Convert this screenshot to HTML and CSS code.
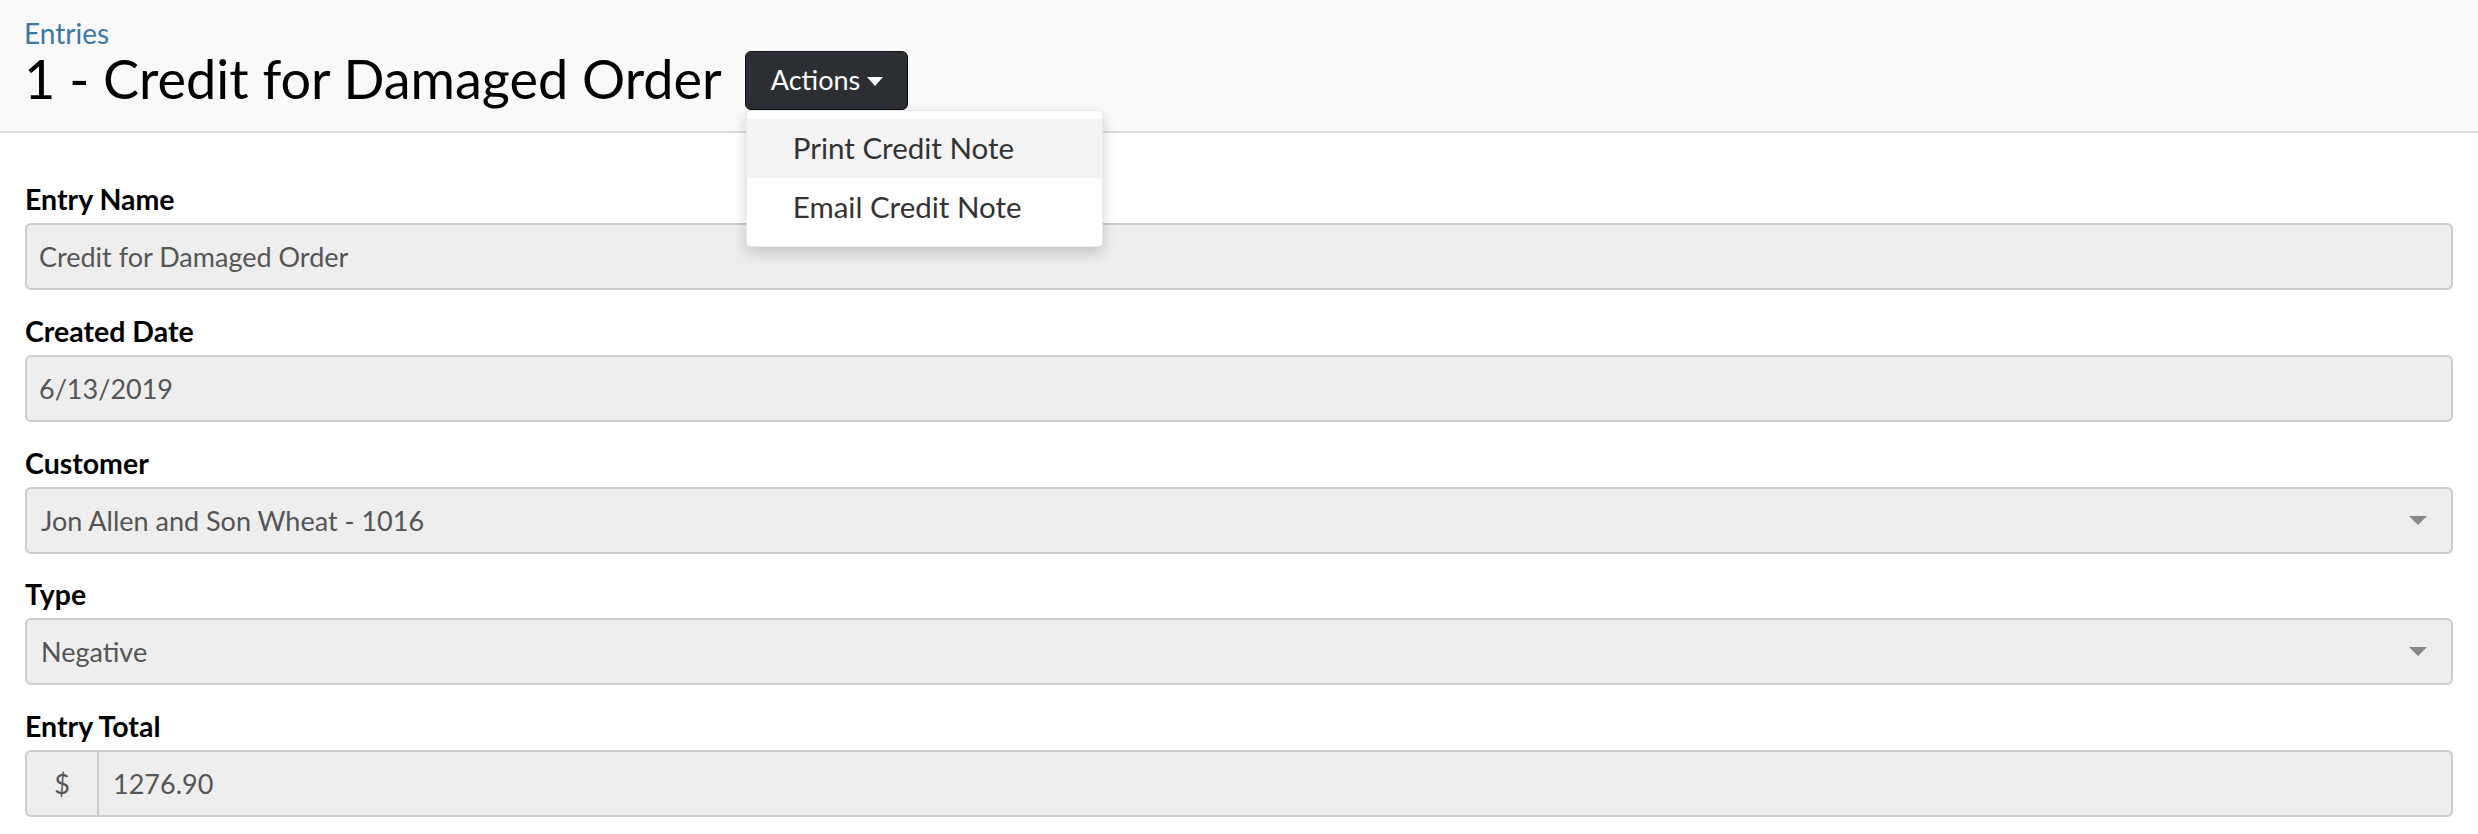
FILE: index.html
```html
<!DOCTYPE html>
<html lang="en">
<head>
<meta charset="utf-8">
<title>1 - Credit for Damaged Order</title>
<link rel="stylesheet" href="styles.css">
</head>
<body>
<header class="page-header">
  <a class="crumb" href="#">Entries</a>
  <div class="title-row">
    <h1 class="title">1 - Credit for Damaged Order</h1>
    <div class="actions">
      <button class="btn-actions" type="button">Actions<span class="caret"></span></button>
      <ul class="menu">
        <li class="menu-item active">Print Credit Note</li>
        <li class="menu-item">Email Credit Note</li>
      </ul>
    </div>
  </div>
</header>
<main class="form">
  <div class="group">
    <label class="label">Entry Name</label>
    <input class="control" type="text" readonly value="Credit for Damaged Order">
  </div>
  <div class="group">
    <label class="label">Created Date</label>
    <input class="control" type="text" readonly value="6/13/2019">
  </div>
  <div class="group">
    <label class="label">Customer</label>
    <div class="control select"><span class="select-text">Jon Allen and Son Wheat - 1016</span><span class="select-caret"></span></div>
  </div>
  <div class="group">
    <label class="label">Type</label>
    <div class="control select"><span class="select-text">Negative</span><span class="select-caret"></span></div>
  </div>
  <div class="group">
    <label class="label">Entry Total</label>
    <div class="input-group">
      <span class="addon">$</span>
      <input class="control grouped" type="text" readonly value="1276.90">
    </div>
  </div>
</main>
</body>
</html>
```

FILE: styles.css
```css
* { box-sizing: border-box; }
html, body { margin: 0; padding: 0; }
body {
  font-family: Lato, "Liberation Sans", sans-serif;
  background: #fff;
  color: #000;
}
.page-header {
  background: #f9f9f9;
  border-bottom: 2px solid #dcdcdc;
  padding: 18px 24px 21px 24px;
  height: 133px;
}
.crumb {
  display: block;
  font-size: 28px;
  line-height: 30px;
  color: #3a77ad;
  text-decoration: none;
}
.title-row {
  display: flex;
  align-items: flex-start;
  margin-top: 2px;
}
.title {
  margin: 0;
  font-weight: 400;
  font-size: 54px;
  line-height: 58px;
  color: #000;
}
.actions {
  position: relative;
  margin-left: 23px;
  margin-top: 1px;
}
.btn-actions {
  display: flex;
  align-items: center;
  height: 59px;
  padding: 0 24px 2px 25px;
  background: #2b2f34;
  border: 1px solid #111;
  border-radius: 6px;
  color: #fff;
  font-family: inherit;
  font-size: 27px;
}
.caret {
  display: inline-block;
  width: 0;
  height: 0;
  margin-left: 7px;
  margin-top: 3px;
  border-top: 9px solid #fff;
  border-left: 8.5px solid transparent;
  border-right: 8.5px solid transparent;
}
.menu {
  position: absolute;
  top: 59px;
  left: 1px;
  width: 357px;
  margin: 0;
  padding: 8px 0 9px 0;
  list-style: none;
  background: #fff;
  border: 1px solid rgba(0,0,0,0.08);
  border-radius: 5px;
  box-shadow: 0 6px 14px rgba(0,0,0,0.18);
  z-index: 10;
}
.menu-item {
  height: 59px;
  display: flex;
  align-items: center;
  padding-left: 46px;
  padding-bottom: 3px;
  font-size: 29.5px;
  color: #333;
}
.menu-item.active { background: #f4f4f4; }
.form {
  padding: 49px 25px 0 25px;
}
.group {
  margin-bottom: 23.75px;
}
.label {
  display: block;
  font-weight: 700;
  font-size: 28.5px;
  line-height: 34px;
  margin-bottom: 7px;
  color: #000;
}
.control {
  display: block;
  width: 100%;
  height: 67px;
  padding: 0 12px;
  background: #eeeeee;
  border: 2px solid #cccccc;
  border-radius: 6px;
  font-family: inherit;
  font-size: 27px;
  color: #555;
  outline: none;
}
.select {
  display: flex;
  align-items: center;
  justify-content: space-between;
  padding: 0 24px 0 14px;
}
.select-caret {
  width: 0;
  height: 0;
  border-top: 9px solid #888;
  border-left: 9px solid transparent;
  border-right: 9px solid transparent;
}
.input-group {
  display: flex;
  height: 67px;
}
.addon {
  width: 74px;
  flex: none;
  display: flex;
  align-items: center;
  justify-content: center;
  background: #eeeeee;
  border: 2px solid #cccccc;
  border-radius: 6px 0 0 6px;
  font-size: 27px;
  color: #555;
}
.control.grouped {
  flex: 1;
  border-left: none;
  border-radius: 0 6px 6px 0;
  padding-left: 14px;
}
```
